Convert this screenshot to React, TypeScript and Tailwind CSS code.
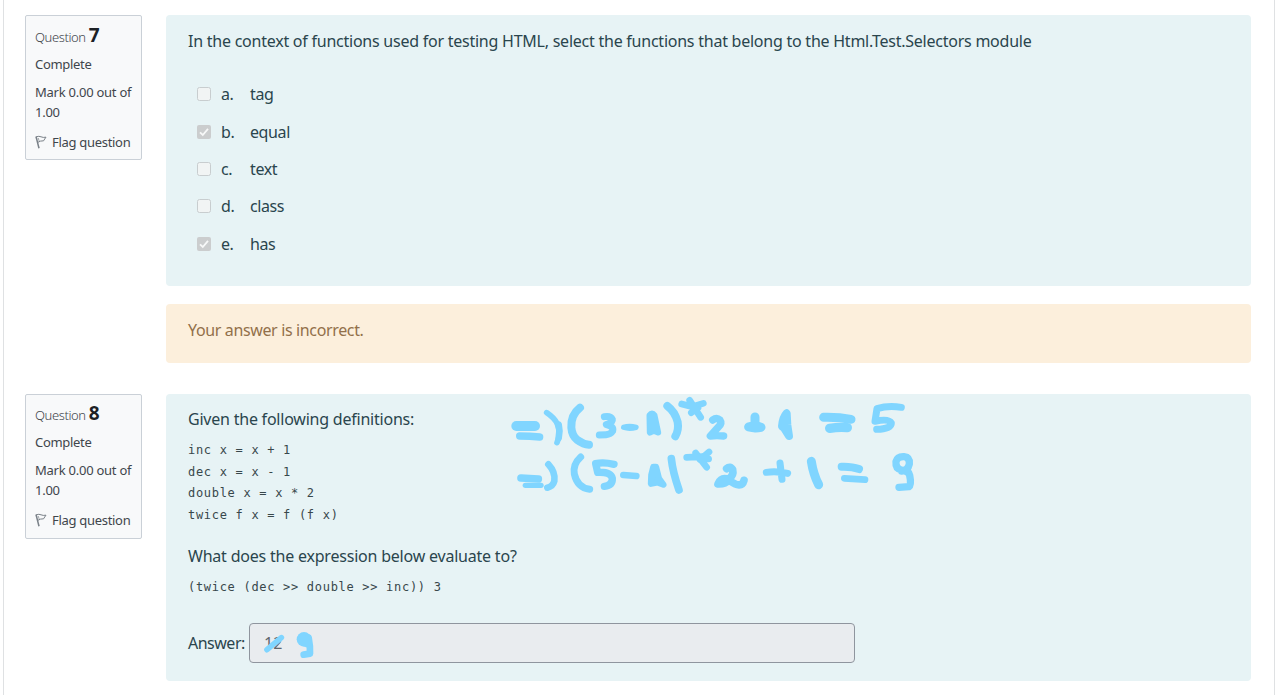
import type { ReactNode } from "react";

function FlagIcon() {
  return (
    <svg viewBox="0 0 12 14" className="h-[14px] w-3 shrink-0" fill="none" stroke="#7a8188" strokeWidth="1">
      <path d="M1 1.5 L4 13.3" strokeWidth="1.5" />
      <path d="M1.2 1.8 Q4 .8 6 1.8 T11 2.2 Q9.6 4 8.6 5.8 Q5.5 5.6 2.6 7.4" />
      <path d="M3.2 3 L4.2 6" strokeWidth=".7" />
    </svg>
  );
}

function QuestionInfo({ number, className }: { number: number; className: string }) {
  return (
    <aside className={`h-[145px] w-[117px] shrink-0 rounded-[2px] border border-[#cad0d7] bg-[#f8f9fa] pl-[9px] text-[13px] leading-5 text-[#3f464c] ${className}`}>
      <h3 className="flex h-[22px] items-baseline gap-[3px] whitespace-nowrap font-light">
        <span className="tracking-[-0.4px]">Question</span>
        <span className="text-[19px] font-bold leading-[22px] text-[#1d2125]">{number}</span>
      </h3>
      <div className="mt-[7.5px] tracking-[-0.3px]">Complete</div>
      <div className="mt-[9.5px] whitespace-nowrap leading-[19.5px] tracking-[-0.25px]">
        Mark 0.00 out of
        <br />
        1.00
      </div>
      <div className="mt-[9.5px] flex items-center gap-[5px] whitespace-nowrap tracking-[-0.3px]">
        <FlagIcon />
        <span>Flag question</span>
      </div>
    </aside>
  );
}

function Checkbox({ checked }: { checked: boolean }) {
  return checked ? (
    <svg viewBox="0 0 14 14" className="size-[14px]">
      <rect width="14" height="14" rx="2" fill="#cbcdce" />
      <path d="M3 7.3 L5.8 10 L11 3.8" fill="none" stroke="#f7f8f8" strokeWidth="1.8" />
    </svg>
  ) : (
    <span className="size-[14px] rounded-[2.5px] border border-[#c8cdcf] bg-[#f1f4f4]" />
  );
}

function Panel({ className, children }: { className: string; children: ReactNode }) {
  return <section className={`w-[1085px] rounded-[4px] bg-[#e7f3f5] pl-[22px] text-[#2a454d] ${className}`}>{children}</section>;
}

const choices = [
  { letter: "a.", label: "tag", checked: false },
  { letter: "b.", label: "equal", checked: true },
  { letter: "c.", label: "text", checked: false },
  { letter: "d.", label: "class", checked: false },
  { letter: "e.", label: "has", checked: true },
];

function Ink() {
  return (
    <svg
      viewBox="0 0 1280 695"
      className="pointer-events-none absolute left-0 top-0 h-[695px] w-[1280px]"
      fill="none"
      stroke="#80d5ff"
      strokeLinecap="round"
      strokeLinejoin="round"
    >
      <g transform="translate(500 390) scale(.33333)" strokeWidth="20">
        <path d="M49 108 H105" strokeWidth="30" />
        <path d="M59 138 Q90 138 119 141" strokeWidth="22" />
        <path d="M140 68 Q164 84 172 102 Q184 130 171 158" strokeWidth="17" />
        <path d="M176 104 Q181 124 176 144" strokeWidth="20" />
        <path d="M240 53 Q212 75 214 113 Q216 138 232 150 Q250 163 267 164" strokeWidth="24" />
        <path d="M313 80 Q332 77 337 88 Q339 97 319 104 Q342 109 338 123 Q332 133 318 134 L298 135" strokeWidth="21" />
        <path d="M371 112 Q388 106 408 112 Q388 118 371 112Z" fill="#80d5ff" strokeWidth="16" />
        <path d="M449 76 Q456 66 463 76 L474 127 L461 122 L450 127Z" fill="#80d5ff" strokeWidth="19" />
        <path d="M502 48 Q525 65 533 96 Q537 120 526 139" strokeWidth="24" />
        <path d="M545 42 L577 50 L610 40 M569 31 L602 82 M574 68 L594 53" strokeWidth="20" />
        <path d="M570 40 L598 45 L594 60 L576 60Z" fill="#80d5ff" strokeWidth="8" />
        <path d="M63 264 L115 267" strokeWidth="23" />
        <path d="M76 286 H123" strokeWidth="16" />
        <path d="M145 223 Q167 247 163 273 Q159 289 142 293" strokeWidth="20" />
        <path d="M242 201 Q218 223 223 252 Q232 293 269 298" strokeWidth="21" />
        <path d="M342 223 Q310 215 287 221 L293 247 Q332 245 337 265 Q338 286 313 289" strokeWidth="22" />
        <path d="M370 255 L409 258" strokeWidth="20" />
        <path d="M460 231 L468 231 L477 266 L490 284 L472 277 L453 281 L454 255Z" fill="#80d5ff" strokeWidth="19" />
        <path d="M514 206 Q518 245 537 300" strokeWidth="23" />
        <path d="M560 202 L606 200 M587 189 L620 232 M600 209 L627 186 M602 205 L626 207" strokeWidth="20" />
      </g>
      <g transform="translate(700 390) scale(.33333)" strokeWidth="20">
        <path d="M38 90 Q50 81 60 90 Q67 100 55 111 L31 138 Q51 136 71 138" strokeWidth="22" />
        <path d="M165 81 V114 M146 111 Q165 103 183 112 Q165 116 146 111Z" fill="#80d5ff" strokeWidth="27" />
        <path d="M260 70 L262 105 L267 138 L252 114 L246 109 Q248 83 260 70Z" fill="#80d5ff" strokeWidth="24" />
        <path d="M371 82 Q416 81 453 88" strokeWidth="27" />
        <path d="M389 115 Q415 111 442 113" strokeWidth="28" />
        <path d="M604 52 Q565 45 531 56 L525 94 Q566 85 574 99 Q575 116 530 118" strokeWidth="21" />
        <path d="M80 236 Q91 226 98 239 Q102 256 87 266 M87 269 Q64 260 54 282 Q76 283 86 270 Q125 299 132 271" strokeWidth="23" />
        <path d="M240 219 L246 268 M199 247 Q228 242 263 250" strokeWidth="21" />
        <path d="M334 214 Q340 253 356 284" strokeWidth="27" />
        <path d="M425 230 Q456 229 477 237" strokeWidth="24" />
        <path d="M433 265 L495 269" strokeWidth="20" />
        <path d="M605 240 Q586 237 588 215 Q592 199 612 200 Q630 202 628 222 Q624 241 605 243 Q625 239 629 256 Q635 285 627 290 L597 292" strokeWidth="22" />
      </g>
      <g transform="translate(170 610) scale(.33333)">
        <path d="M291 119 L334 83" strokeWidth="17" />
        <circle cx="402" cy="88" r="22" fill="#80d5ff" stroke="none" />
        <path d="M416 83 Q421 108 420 131 L401 134 M405 99 L414 104" strokeWidth="20" />
      </g>
    </svg>
  );
}

export default function App() {
  return (
    <div className="relative h-[695px] w-[1280px] overflow-hidden bg-white pl-[3px] font-['Noto_Sans',sans-serif]">
      <main className="h-[695px] w-[1272px] border-x border-[#dfe1e3] pl-[21px] pt-[15px] text-[16px] leading-6">
        <article className="flex h-[379px] gap-6">
          <QuestionInfo number={7} className="pt-[8px]" />
          <div>
            <Panel className="h-[271px] pt-[14px]">
              <p className="whitespace-nowrap tracking-[-0.24px]">
                In the context of functions used for testing HTML, select the functions that belong to the Html.Test.Selectors module
              </p>
              <ul className="mt-[22.5px] pl-[9px]">
                {choices.map((c) => (
                  <li key={c.letter} className="flex h-[37.4px] items-center tracking-[-0.4px]">
                    <Checkbox checked={c.checked} />
                    <span className="ml-[10px] w-[29px]">{c.letter}</span>
                    <span>{c.label}</span>
                  </li>
                ))}
              </ul>
            </Panel>
            <section className="mt-[18px] h-[59px] w-[1085px] rounded-[4px] bg-[#fcefdc] pl-[22px] pt-[14px] tracking-[-0.36px] text-[#92704a]">
              Your answer is incorrect.
            </section>
          </div>
        </article>
        <article className="flex gap-6">
          <QuestionInfo number={8} className="pt-[7px]" />
          <Panel className="h-[287px] pt-[13px]">
            <p className="tracking-[-0.22px]">Given the following definitions:</p>
            <pre className="mt-[9px] font-['DejaVu_Sans_Mono',monospace] text-[12px] leading-[21.7px] tracking-[0.7px] text-[#38474b]">
              {"inc x = x + 1\ndec x = x - 1\ndouble x = x * 2\ntwice f x = f (f x)"}
            </pre>
            <p className="mt-[17px] tracking-[-0.21px]">What does the expression below evaluate to?</p>
            <pre className="mt-[8px] font-['DejaVu_Sans_Mono',monospace] text-[12px] leading-[22px] tracking-[0.7px] text-[#38474b]">
              {"(twice (dec >> double >> inc)) 3"}
            </pre>
            <div className="mt-[25px] flex items-center">
              <span className="w-[61px] whitespace-nowrap tracking-[-0.5px]">Answer:</span>
              <div className="h-[40px] w-[606px] rounded-[4px] border border-[#8f959e] bg-[#e9ecef] pl-[14px] leading-[38px] text-[#5f666d]">
                12
              </div>
            </div>
          </Panel>
        </article>
      </main>
      <Ink />
    </div>
  );
}
